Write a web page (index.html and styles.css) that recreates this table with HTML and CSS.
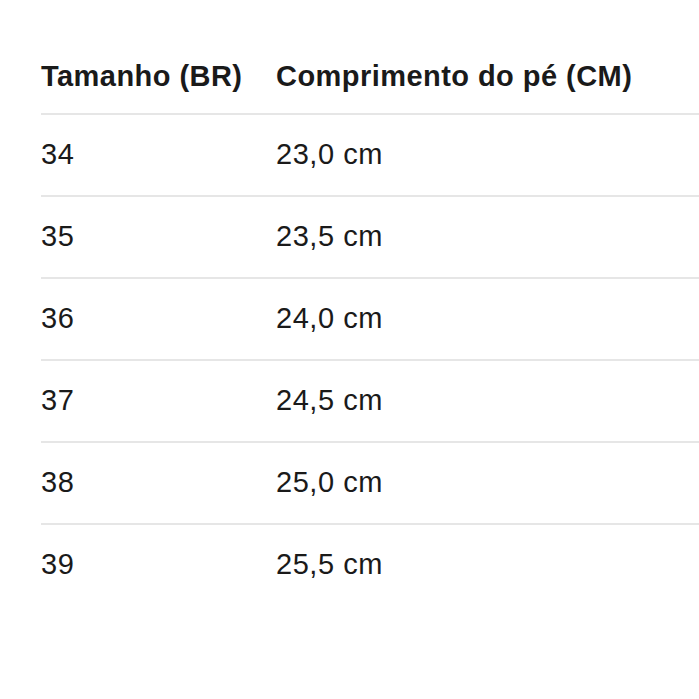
FILE: index.html
```html
<!DOCTYPE html>
<html lang="pt">
<head>
<meta charset="utf-8">
<link rel="stylesheet" href="styles.css">
</head>
<body>
<div class="table">
  <div class="row head">
    <div class="cell c1">Tamanho (BR)</div>
    <div class="cell c2">Comprimento do pé (CM)</div>
  </div>
  <div class="row"><div class="cell c1">34</div><div class="cell c2">23,0 cm</div></div>
  <div class="row"><div class="cell c1">35</div><div class="cell c2">23,5 cm</div></div>
  <div class="row"><div class="cell c1">36</div><div class="cell c2">24,0 cm</div></div>
  <div class="row"><div class="cell c1">37</div><div class="cell c2">24,5 cm</div></div>
  <div class="row"><div class="cell c1">38</div><div class="cell c2">25,0 cm</div></div>
  <div class="row last"><div class="cell c1">39</div><div class="cell c2">25,5 cm</div></div>
</div>
</body>
</html>
```
FILE: styles.css
```css
html, body {
  margin: 0;
  padding: 0;
  background: #ffffff;
}
body {
  width: 699px;
  height: 699px;
  overflow: hidden;
  font-family: "Liberation Sans", Arial, sans-serif;
  color: #1a1a1a;
}
.table {
  padding-left: 41px;
  padding-top: 59px;
}
.row {
  display: grid;
  grid-template-columns: 235px 1fr;
  border-bottom: 2px solid #e6e6e6;
  padding: 22px 0 24px;
  letter-spacing: 0.55px;
}
.row.head {
  padding: 0 0 20px;
  font-weight: 700;
  letter-spacing: 0.45px;
}
.row.last {
  border-bottom: none;
}
.cell {
  font-size: 29px;
  line-height: 34px;
  white-space: nowrap;
}
```
